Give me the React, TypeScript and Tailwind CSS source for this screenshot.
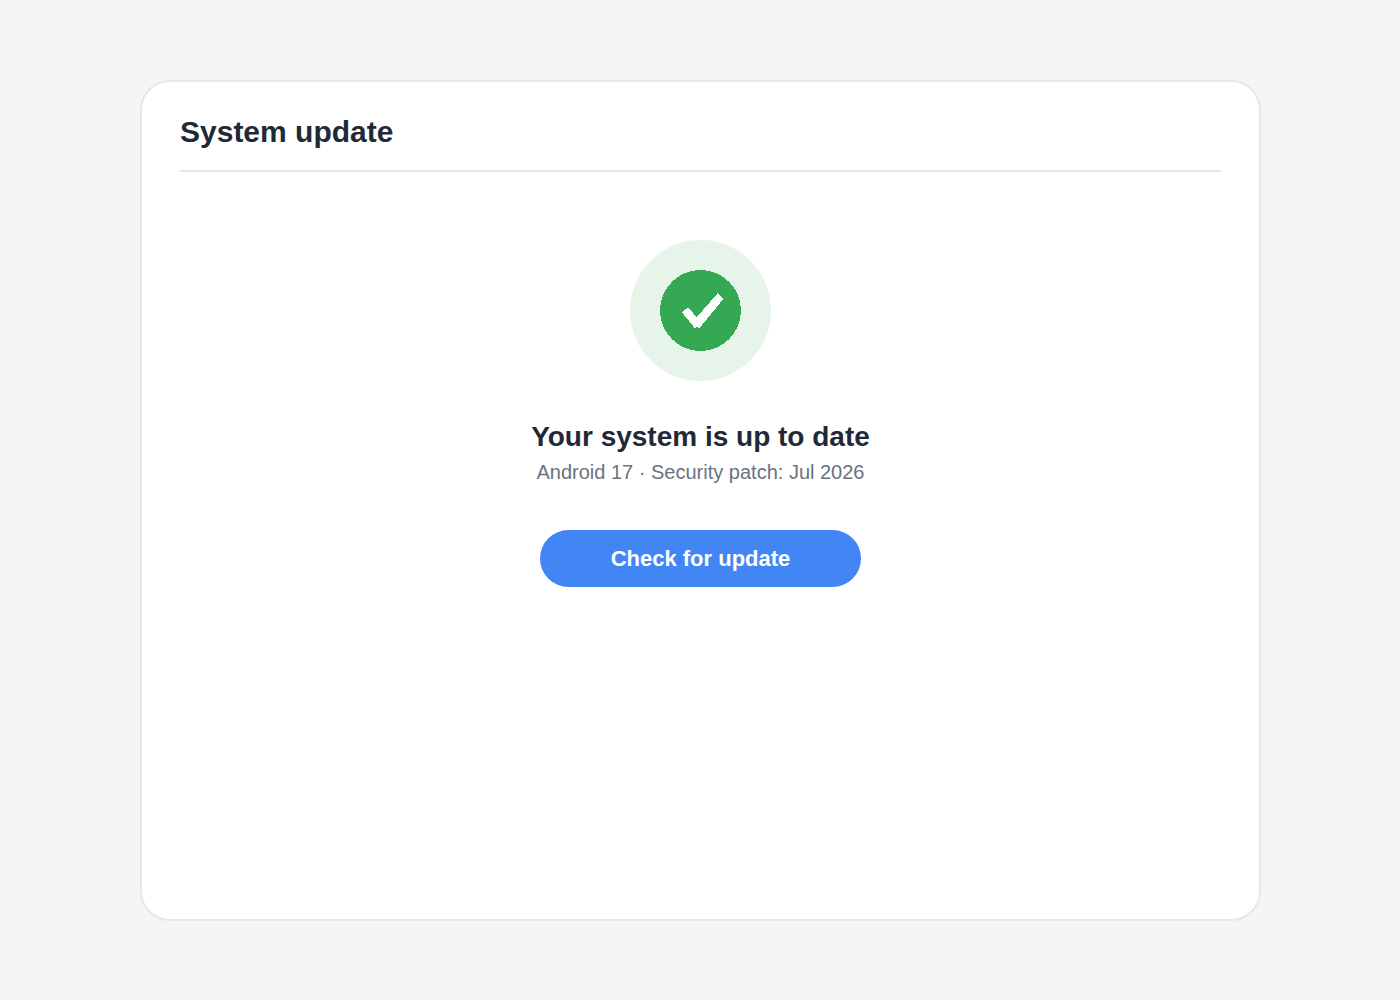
interface UpdateStatus {
  title: string;
  version: string;
  patch: string;
}

const status: UpdateStatus = {
  title: 'Your system is up to date',
  version: 'Android 17',
  patch: 'Jul 2026',
};

function StatusBadge() {
  return (
    <div className="flex size-[141px] items-center justify-center rounded-full bg-[#e6f4ea]">
      <svg
        viewBox="0 0 81 81"
        className="size-[81px]"
        shapeRendering="crispEdges"
        aria-hidden="true"
      >
        <circle cx="40.5" cy="40.5" r="40.5" fill="#34a853" />
        <path
          d="M22 42.5 L28 37.3 L36.7 47.2 L57.5 23.4 L63.4 28.9 L39.6 58 L38 58 L37 56.4 L36 58 L34.6 58 Z"
          fill="#fff"
        />
      </svg>
    </div>
  );
}

export default function App() {
  return (
    <div className="flex min-h-screen bg-[#f5f5f5] pt-20 pr-[139px] pb-[79px] pl-[140px] font-['Liberation_Sans',Arial,sans-serif]">
      <main className="flex-1 rounded-[30px] border-2 border-[#e5e7eb] bg-white px-[38px] pt-8">
        <header className="border-b-2 border-[#e5e7eb] pb-5">
          <h1 className="text-[30px] leading-9 font-bold text-[#1f2937]">System update</h1>
        </header>

        <section className="flex flex-col items-center pt-[68px] text-center">
          <StatusBadge />
          <h2 className="mt-10 text-[28px] leading-8 font-bold text-[#1f2937]">{status.title}</h2>
          <p className="mt-1 text-xl leading-[30px] text-[#6b7280]">
            {status.version} · Security patch: {status.patch}
          </p>
          <button
            type="button"
            className="mt-[43px] h-[57px] w-[321px] max-w-full cursor-pointer rounded-full bg-[#4285f4] text-[22px] font-bold text-white"
          >
            Check for update
          </button>
        </section>
      </main>
    </div>
  );
}
